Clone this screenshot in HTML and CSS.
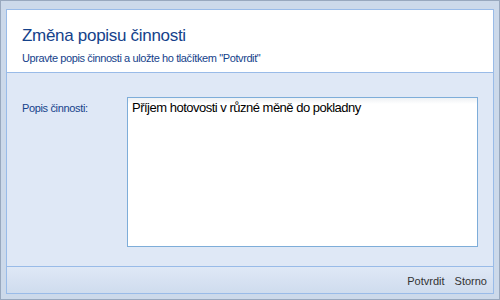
FILE: index.html
```html
<!DOCTYPE html>
<html lang="cs">
<head>
	<meta charset="UTF-8">
	<title>Změna popisu činnosti</title>
	<link rel="stylesheet" href="styles.css">
</head>
<body>
	<div class="win">
		<div class="win-inner">
			<div class="head">
				<h1>Změna popisu činnosti</h1>
				<p>Upravte popis činnosti a uložte ho tlačítkem "Potvrdit"</p>
			</div>
			<div class="form">
				<label for="popis">Popis činnosti:</label>
				<textarea id="popis">Příjem hotovosti v různé měně do pokladny</textarea>
			</div>
			<div class="foot">
				<a href="javascript:;">Potvrdit</a>
				<a href="javascript:;">Storno</a>
			</div>
		</div>
	</div>
</body>
</html>
```

FILE: styles.css
```css
html,body,h1,p{margin: 0;padding: 0;}
body{font-family: "Liberation Sans", Arial, sans-serif;width: 500px;height: 300px;}
a{text-decoration: none;}
.win{box-sizing: border-box;width: 500px;height: 300px;padding: 8px 5px 5px;background: #ccd9ea;border: 1px solid #98a8be;}
.win-inner{height: 100%;box-sizing: border-box;border: 1px solid #99bbe8;display: flex;flex-direction: column;background: #dfe8f6;}
.head{background: #fff;border-bottom: 1px solid #99bbe8;padding: 16px 0 0 15px;height: 46px;}
.head h1{font-size: 17px;letter-spacing: -0.3px;font-weight: normal;color: #15428b;line-height: 20px;}
.head p{font-size: 11px;letter-spacing: -0.4px;color: #15428b;margin-top: 5px;line-height: 14px;}
.form{flex: 1;display: flex;padding: 24px 15px 0;}
.form label{width: 105px;font-size: 11px;letter-spacing: -0.35px;color: #15428b;padding-top: 5px;}
.form textarea{width: 351px;height: 150px;box-sizing: border-box;border: 1px solid #7eadd9;padding: 2px 4px;margin: 0;font: 13px "Liberation Sans", Arial, sans-serif;letter-spacing: -0.5px;color: #000;resize: none;background: #fff linear-gradient(#eef1f4, #fff 6px);outline: none;}
.foot{height: 27px;border-top: 1px solid #99bbe8;background: linear-gradient(#dfe8f6, #cfdcee);display: flex;justify-content: flex-end;align-items: center;gap: 10px;padding: 2px 6px 0 0;box-sizing: border-box;}
.foot a{font-size: 11px;color: #333;}
```
